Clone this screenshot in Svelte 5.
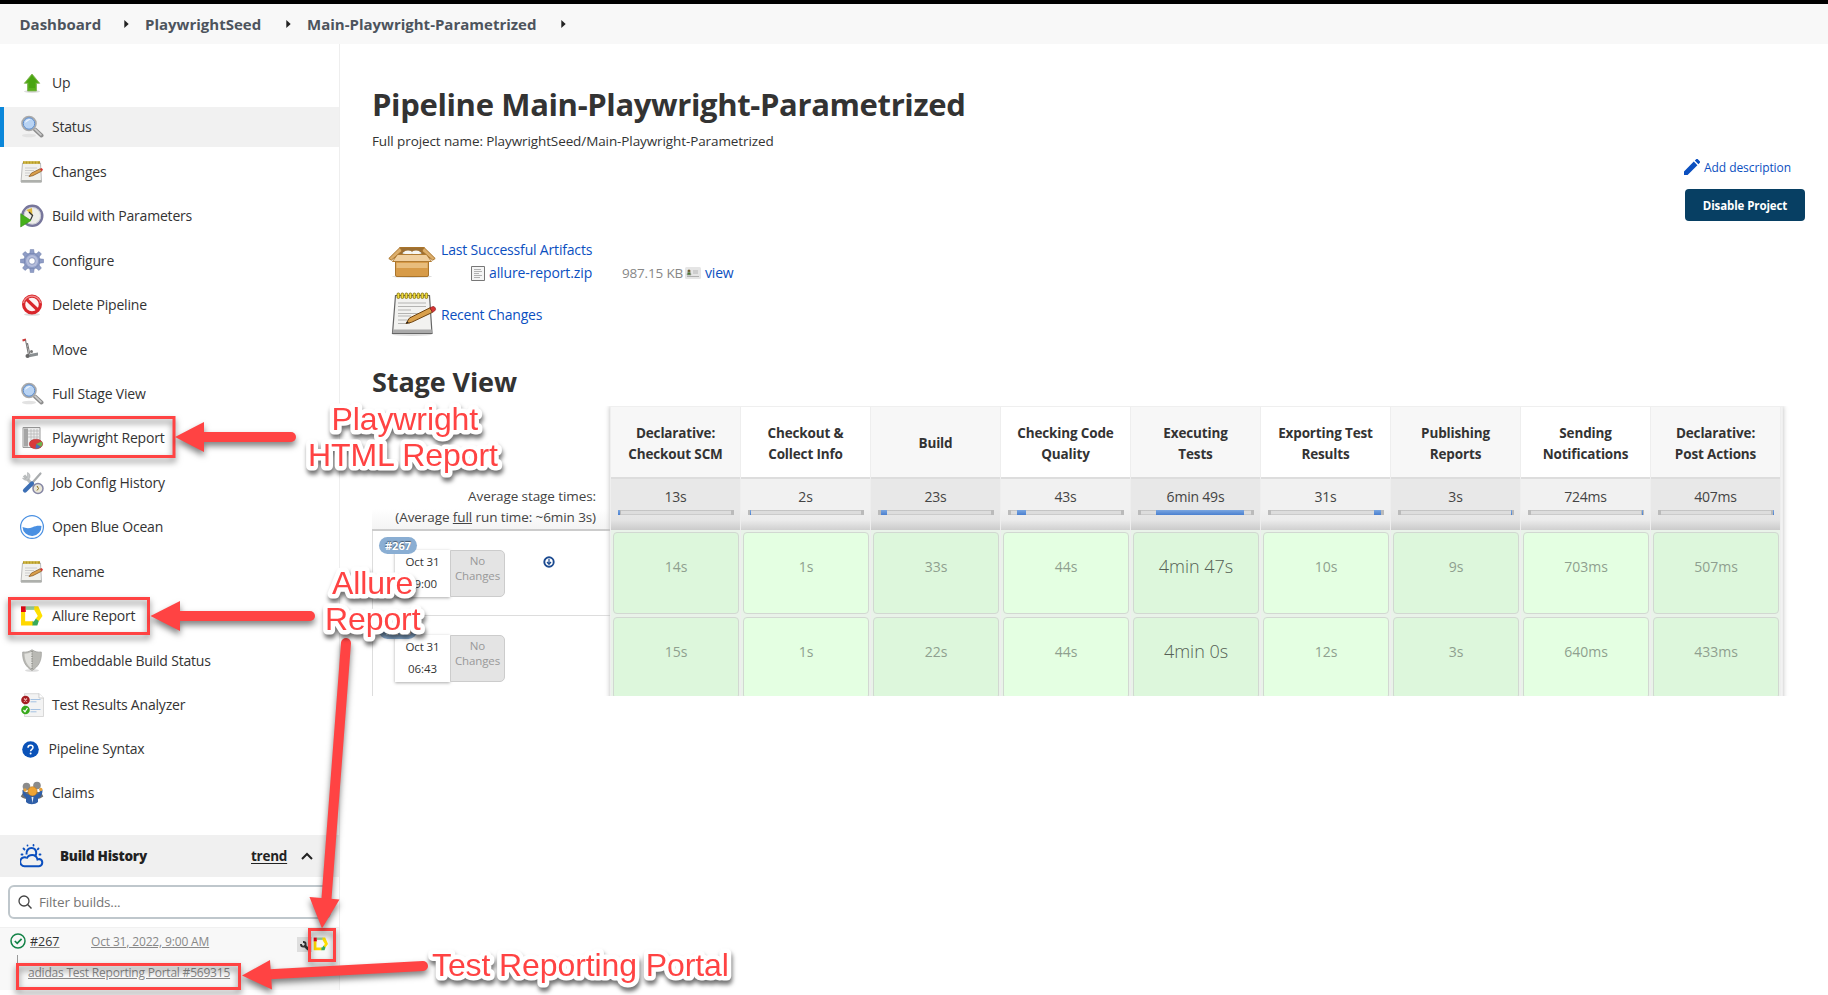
<script>
  const crumbs = [
    { label: 'Dashboard', w: 80 },
    { label: 'PlaywrightSeed', w: 116.5 },
    { label: 'Main-Playwright-Parametrized', w: 229.5 },
  ];

  const tasks = [
    { icon: 'up', label: 'Up' },
    { icon: 'search', label: 'Status', active: true },
    { icon: 'notepad', label: 'Changes' },
    { icon: 'build', label: 'Build with Parameters' },
    { icon: 'gear', label: 'Configure' },
    { icon: 'delete', label: 'Delete Pipeline' },
    { icon: 'move', label: 'Move' },
    { icon: 'search', label: 'Full Stage View' },
    { icon: 'report', label: 'Playwright Report' },
    { icon: 'tools', label: 'Job Config History' },
    { icon: 'ocean', label: 'Open Blue Ocean' },
    { icon: 'notepad', label: 'Rename' },
    { icon: 'allure', label: 'Allure Report' },
    { icon: 'shield', label: 'Embeddable Build Status' },
    { icon: 'results', label: 'Test Results Analyzer' },
    { icon: 'help', label: 'Pipeline Syntax', small: true },
    { icon: 'claims', label: 'Claims' },
  ];

  const stages = [
    { name: ['Declarative:', 'Checkout SCM'], avg: '13s', from: 0, to: 2, runs: ['14s', '15s'] },
    { name: ['Checkout &', 'Collect Info'], avg: '2s', from: 2, to: 3, runs: ['1s', '1s'] },
    { name: ['Build'], avg: '23s', from: 3, to: 9, runs: ['33s', '22s'] },
    { name: ['Checking Code', 'Quality'], avg: '43s', from: 9, to: 18, runs: ['44s', '44s'] },
    { name: ['Executing', 'Tests'], avg: '6min 49s', from: 18, to: 106, runs: ['4min 47s', '4min 0s'], long: true },
    { name: ['Exporting Test', 'Results'], avg: '31s', from: 106, to: 113, runs: ['10s', '12s'] },
    { name: ['Publishing', 'Reports'], avg: '3s', from: 113, to: 114, runs: ['9s', '3s'] },
    { name: ['Sending', 'Notifications'], avg: '724ms', from: 114, to: 115, runs: ['703ms', '640ms'] },
    { name: ['Declarative:', 'Post Actions'], avg: '407ms', from: 115, to: 116, runs: ['507ms', '433ms'] },
  ];

  const runs = [
    { id: '#267', date: 'Oct 31', time: '09:00', artifacts: true },
    { id: '#266', date: 'Oct 31', time: '06:43' },
  ];
</script>

{#snippet allure()}
  <path d="M3.100 8V19.400H13" fill="none" stroke="#ffd800" stroke-width="4.100" />
  <path d="M1 2.300h4.800v5.700H1z" fill="#e30613" />
  <path d="M5.800 2.300h9v3.600h-9z" fill="#97cc9b" />
  <path d="M14.300 2.300H18.300L22.500 12l-3.800 5.200-3.300-2.200L17.800 12 14.300 5.900z" fill="#ffe000" />
  <path d="M12.500 17.400h1.300l2-2.600 3 2.300-1.500 4.350H12.500z" fill="#3aaa5a" />
{/snippet}

{#snippet notepad()}
  <path d="M2.500 3h18l1 19H1z" fill="#f1f1ee" stroke="#aaa" stroke-width=".8" />
  <path d="M1.200 20h20.200v2.600H1z" fill="#aeb0ac" />
  <path d="M3 1.200h17v2.600H3z" fill="#b79a22" />
  <path d="M5 1v3M8 1v3M11 1v3M14 1v3M17 1v3" stroke="#e6d46a" stroke-width=".8" />
  <path d="M5 8h12M5 10.500h9M5 13h5M5 15.500h4" stroke="#c9c9c9" stroke-width=".9" />
  <path d="M9 16.500l2.300-3.300 9-4.500 1.500 2.400-9 4.600z" fill="#dba14e" stroke="#7b4a12" stroke-width=".7" />
  <path d="M20 8.900l1.800-.9 1.300 2.100-1.500 1z" fill="#d93030" />
{/snippet}

{#snippet icon(name)}
  <svg class="ico" viewBox="0 0 24 24">
    {#if name === 'up'}
      <ellipse cx="12" cy="20.500" rx="8" ry="1.500" fill="#ddd" />
      <path d="M12 3l7.700 9.300h-3.200V20h-9v-7.700H4.300z" fill="#58b01c" stroke="#7fae52" stroke-width=".8" />
      <path d="M12 4.500l5.500 7H15V17H9v-5.500H6.500z" fill="#3f9c0a" opacity=".6" />
    {:else if name === 'search'}
      <ellipse cx="9" cy="20.500" rx="7" ry="1.700" fill="#e2e2e2" />
      <path d="M15 14.500l6.500 6" stroke="#8d8d8d" stroke-width="4" stroke-linecap="round" />
      <path d="M15 14.200l6 5.600" stroke="#ccc" stroke-width="1.600" stroke-linecap="round" />
      <circle cx="9" cy="8.500" r="6.800" fill="#a9c9ef" stroke="#aaa" stroke-width="2" />
      <circle cx="9" cy="8.500" r="5.700" fill="#b8d3f3" stroke="#5f8fcf" stroke-width="1" />
      <path d="M5 8a4.500 4.500 0 0 1 6-3.800C9 5 7 6.500 5 8z" fill="#eaf3fd" />
    {:else if name === 'notepad'}
      {@render notepad()}
    {:else if name === 'build'}
      <circle cx="12.300" cy="11.800" r="10" fill="#eeeeea" stroke="#77769b" stroke-width="2.400" />
      <circle cx="12.300" cy="11.800" r="8.300" fill="none" stroke="#bdbdc8" stroke-width=".7" />
      <path d="M6.500 6l5.500-2 .5 8z" fill="#dfb83f" />
      <path d="M9 8l3.600 3.500-2.100 4.500" fill="none" stroke="#333" stroke-width="1.200" />
      <path d="M.7 9.700L11 16.500.7 23z" fill="#45b01b" stroke="#358d13" stroke-width=".6" />
    {:else if name === 'gear'}
      <g fill="#8f9dc6" stroke="#6b7ba8" stroke-width=".5">
        <circle cx="12" cy="12" r="8.200" />
        {#each [0, 45, 90, 135, 180, 225, 270, 315] as a}
          <path d="M9.800 4.600l.5-4.200h3.400l.5 4.200z" transform="rotate({a} 12 12)" />
        {/each}
      </g>
      <circle cx="12" cy="12" r="6" fill="#b4bddb" />
      <circle cx="12" cy="12" r="3.300" fill="#fff" stroke="#7886b2" stroke-width=".8" />
    {:else if name === 'delete'}
      <ellipse cx="12" cy="21.500" rx="8" ry="1.300" fill="#ddd" />
      <circle cx="12" cy="11.500" r="8.400" fill="#fdf3f3" stroke="#d9262b" stroke-width="3.200" />
      <path d="M6.300 6.200l11.500 10.800" stroke="#d9262b" stroke-width="3.200" />
      <path d="M3.500 10a8.700 8.700 0 0 1 17 0" fill="none" stroke="#f08d8d" stroke-width="1.300" />
    {:else if name === 'move'}
      <path d="M2.500 2.500l3.500-1" stroke="#c93b3b" stroke-width="2.200" />
      <path d="M5.500 2l3 15M7.500 5l2.300 11M6 6.500l2-.5M6.500 10l2-.5" stroke="#777" stroke-width="1.100" fill="none" />
      <path d="M9.500 16l8.500-1.500v3L8 19.500z" fill="#8a8f92" />
      <circle cx="7.500" cy="18" r="2" fill="#666" />
      <circle cx="11.500" cy="13.500" r="1.500" fill="#777" />
    {:else if name === 'report'}
      <path d="M3 1.500h17v20H3z" fill="#ededed" stroke="#9a9a9a" />
      <path d="M4 2.500h4v18H4z" fill="#a5a5a5" />
      <path d="M8 5h11M8 8h11M8 11h11M11 3v13M14 3v10M17 3v10" stroke="#b9b9b9" stroke-width=".8" />
      <ellipse cx="16" cy="18" rx="6.700" ry="4.800" fill="#d93a3a" stroke="#a32020" stroke-width=".5" />
      <path d="M16 18l5.500-2.500c1.500 2 .8 4-.5 5.200z" fill="#6fb24d" />
      <path d="M16 18l4.800 2.800c-1.500 1.300-3.500 1.900-5.300 1.900z" fill="#4a72b8" />
    {:else if name === 'tools'}
      <path d="M4 4.500l13 14" stroke="#b9bcbd" stroke-width="3.200" />
      <path d="M7.500 1.500a4 4 0 1 1-5 5.500l3 .8 1.800-1.800z" fill="#c5c8c9" stroke="#a0a3a4" stroke-width=".5" />
      <path d="M20.500 2.500L13 11" stroke="#a9acae" stroke-width="2.200" stroke-linecap="round" />
      <path d="M12 12.500L5 19.500" stroke="#3c6fb5" stroke-width="4.200" stroke-linecap="round" />
      <circle cx="18" cy="17.500" r="5" fill="#e9e6d8" stroke="#8586a4" stroke-width="1.500" />
      <path d="M17 15l1.500 2.500-1.500 2" stroke="#8a6a10" fill="none" />
    {:else if name === 'ocean'}
      <circle cx="12" cy="12" r="11.400" fill="#fff" stroke="#4a90e2" stroke-width="1.200" />
      <path d="M2.500 12c3 1.300 6.500 1.700 10 .2 3.200-1.500 6-1.900 9-1.200a9.500 9.500 0 0 1-19 1z" fill="#4a90e2" />
    {:else if name === 'allure'}
      {@render allure()}
    {:else if name === 'shield'}
      <ellipse cx="12" cy="21.500" rx="7" ry="1.300" fill="#ddd" />
      <path d="M12 .8c3 2 6 2.700 9.300 2.200.5 8-2.300 14.500-9.300 18.500C5 17.500 2.200 11 2.700 3 6 3.500 9 2.800 12 .8z" fill="#b9b9b4" stroke="#a2a29e" stroke-width=".8" />
      <path d="M12 2.500c-2.500 1.500-5 2.200-7.500 2.200C4.500 11 7 16.500 12 19.800z" fill="#e0e0dc" />
      <path d="M12 2v19" stroke="#858580" stroke-width="1.200" stroke-dasharray="1.200 1.200" />
    {:else if name === 'results'}
      <path d="M4.500.7h14.700L23.500 5v18.500h-19z" fill="#f3f3f3" stroke="#cfcfcf" stroke-width=".8" />
      <path d="M19 .7V5h4.500" fill="#fff" stroke="#bbb" stroke-width=".7" />
      <path d="M10.500 6.500h10M10.500 8.800h6M10.500 16.500h10M10.500 18.800h6" stroke="#9bbbe0" stroke-width=".9" />
      <circle cx="5.500" cy="7" r="4.300" fill="#a41e22" />
      <path d="M4 5.500l3 3m0-3l-3 3" stroke="#f3b5b5" stroke-width="1.200" />
      <circle cx="5.500" cy="17" r="4.300" fill="#37a81a" />
      <path d="M3.500 17l1.500 1.800 2.500-3.800" fill="none" stroke="#fff" stroke-width="1.200" />
    {:else if name === 'claims'}
      <path d="M3.500 11h7l1 6.500C8 19 4 18 .7 15.500zM13 11h8l2.300 4.500c-3 2.500-7 3-10 2z" fill="#707070" />
      <circle cx="6.500" cy="5.500" r="3.800" fill="#8b8b8b" />
      <circle cx="17" cy="4.500" r="3.800" fill="#8b8b8b" />
      <path d="M4 8.500c.5 3 2.500 5 4.500 5h7c2.500 0 4.500-2 5-5.500l2 1c0 5-2 7.500-4.500 8.500v3.500c-3.500 3-9 3-12 0v-4C3.500 15.500 2 12.500 2.500 9z" fill="#2f5fa8" />
      <circle cx="5" cy="9" r="1.700" fill="#e5a03a" />
      <circle cx="20.800" cy="8.500" r="1.700" fill="#e5a03a" />
      <circle cx="12.500" cy="10.300" r="4.600" fill="#f0a433" stroke="#b7741a" stroke-width=".6" />
      <path d="M11.500 16l1 6 1-6z" fill="#e7edf6" />
    {/if}
  </svg>
{/snippet}

<div class="page">
  <div class="topline"></div>
  <nav class="crumbs">
    {#each crumbs as c}
      <a class="crumb" style="width:{c.w}px">{c.label}</a>
      <svg class="tri" viewBox="0 0 5 8"><path d="M.3 0L4.700 4 .3 8z" fill="#222" /></svg>
    {/each}
  </nav>

  <div class="body">
    <aside>
      <div class="tasks">
        {#each tasks as t}
          <a class="task" class:active={t.active} class:small={t.small}>
            {#if t.small}
              <svg class="ico16" viewBox="0 0 17 17">
                <circle cx="8.500" cy="8.500" r="8.300" fill="#0b52b8" />
                <path d="M6 6.700C6 5.200 7 4.300 8.500 4.300S11 5.200 11 6.500c0 1.900-2.400 1.900-2.400 3.800" fill="none" stroke="#fff" stroke-width="1.500" />
                <circle cx="8.600" cy="12.500" r="1" fill="#fff" />
              </svg>
            {:else}
              {@render icon(t.icon)}
            {/if}
            <span>{t.label}</span>
          </a>
        {/each}
      </div>

      <div class="bh">
        <svg class="ico" viewBox="0 0 24 24" fill="none" stroke="#0b4fbf" stroke-width="2">
          <path d="M6 13.500a4.500 4.500 0 1 0-1.500 8.800H19a3.700 3.700 0 0 0 .3-7.300c-.8 0-1.300.2-1.800.5-.7-2.800-2.700-4.500-5.300-4.500-2.700 0-4.700 1.500-5.700 3.700" />
          <path d="M6.500 10.500C6 6.500 8.500 4 11.500 4s5 2.200 4.700 5.500c-.1 1.200-.5 2-1.200 3" />
          <path d="M3.500 4.500l1 1M7.500 1.500v.01M13.500 1v.6M18.500 4.500l-.8.800M20.500 10.500h-1M1.500 10.500h1" stroke-width="1.800" stroke-linecap="round" />
        </svg>
        <b>Build History</b>
        <u>trend</u>
        <svg class="chev" viewBox="0 0 12 8"><path d="M1 7l5-5 5 5" fill="none" stroke="#222" stroke-width="2" /></svg>
      </div>

      <div class="filter">
        <svg viewBox="0 0 14 14"><circle cx="6" cy="6" r="5" fill="none" stroke="#444" stroke-width="1.300" /><path d="M9.600 9.600l3.900 3.900" stroke="#444" stroke-width="1.400" /></svg>
        <span>Filter builds...</span>
      </div>

      <div class="builds">
        <div class="brow">
          <svg class="ok" viewBox="0 0 16 16"><circle cx="8" cy="8" r="7" fill="none" stroke="#138347" stroke-width="1.500" /><path d="M4.800 8l2.400 2.400 4.400-4.600" fill="none" stroke="#138347" stroke-width="1.700" /></svg>
          <a class="num">#267</a>
          <a class="when">Oct 31, 2022, 9:00 AM</a>
          <svg class="wrench" viewBox="0 0 15 15"><path d="M0 0h15v15H0z" fill="#dedede" /><path d="M7.500 8.500l4 4" stroke="#333" stroke-width="2.600" /><circle cx="6.300" cy="7.300" r="2.300" fill="none" stroke="#333" stroke-width="1.900" /><path d="M2 4h4v3H2z" fill="#dedede" /></svg>
          <svg class="mini" viewBox="0 0 24 24">{@render allure()}</svg>
        </div>
        <div class="portal"><i></i><a>adidas Test Reporting Portal #569315</a></div>
      </div>
    </aside>

    <main>
      <h1>Pipeline Main-Playwright-Parametrized</h1>
      <p class="full">Full project name: PlaywrightSeed/Main-Playwright-Parametrized</p>
      <div class="actions">
        <a class="desc">
          <svg viewBox="0 0 16 16"><path d="M0 16v-3.600L9.800 2.600l3.600 3.600L3.600 16zM10.800 1.600L12.400 0c.4-.3.900-.3 1.200 0L16 2.400c.3.400.3.900 0 1.200l-1.600 1.600z" fill="#0b4fbf" /></svg>
          <span>Add description</span>
        </a>
        <button>Disable Project</button>
      </div>

      <div class="artifacts">
        <svg class="box" viewBox="0 0 48 32">
          <ellipse cx="24" cy="30.500" rx="20" ry="1.500" fill="#ddd" />
          <path d="M12 1.500h24l3 13H9z" fill="#9c6f33" stroke="#a9742b" />
          <path d="M15 6h18l1 5H14z" fill="#d9d9d3" /><ellipse cx="20" cy="6.500" rx="4" ry="2" fill="#f6f6f2" /><ellipse cx="28" cy="6.500" rx="4" ry="2" fill="#f6f6f2" />
          <path d="M12 1.500L.8 12.500l2.500 1.700L14 5zM36 1.500l11.200 11-2.500 1.700L34 5z" fill="#dcae6b" stroke="#a9742b" />
          <path d="M7.500 15.500h33V29q0 1.500-1.500 1.500H9q-1.500 0-1.500-1.500z" fill="#d79b48" stroke="#a9742b" />
          <path d="M8.500 17h31v5h-31z" fill="#e8bd7c" />
          <path d="M9.500 8.500h29l5 7h-39z" fill="#f0d0a0" stroke="#b07b32" />
        </svg>
        <div class="art">
          <a class="last">Last Successful Artifacts</a>
          <div class="file">
            <svg class="doc" viewBox="0 0 14 15"><path d="M.5.5h13v14H.5z" fill="#f5f5f5" stroke="#777" /><path d="M3 3.500h7M3 5.500h8M3 7.500h5M3 9.500h8M3 11.500h6" stroke="#aaa" stroke-width=".9" /></svg>
            <a class="zip">allure-report.zip</a>
            <span class="size">987.15 KB</span>
            <svg class="card" viewBox="0 0 16 12"><rect width="16" height="12" rx="1.500" fill="#e5e5e5" /><circle cx="4" cy="4" r="1.500" fill="#6d5a2a" /><path d="M2 8q0-3 2-3t2 3zM2 9.500h12" fill="#4c7a34" stroke="#999" stroke-width=".7" /><path d="M8 4h5M8 6h5" stroke="#aaa" stroke-width=".8" /></svg>
            <a class="view">view</a>
          </div>
        </div>
      </div>
      <div class="recent">
        <svg viewBox="0 0 46 44">
          <ellipse cx="21" cy="42.500" rx="20" ry="1.500" fill="#ddd" />
          <path d="M4.500 3.500h34l2.500 38H1.500z" fill="#f2f2f0" stroke="#666" stroke-width="1.200" />
          <path d="M2 37.500h38.700l.2 3.500H1.700z" fill="#aaa" />
          <path d="M7 11h28M7 14.500h28M7 18h13M7 24h13M7 28h11M7 31.500h12M7 21.500h20" stroke="#b4b4b2" />
          {#each [6, 10, 14, 18, 22, 26, 30, 34] as x}
            <rect x={x} y="1" width="2.700" height="5.500" rx="1.300" fill="#f0dc3c" stroke="#7d6a08" stroke-width=".8" />
          {/each}
          <path d="M15 31.500l3.500-5.500L39 15.800l2.500 4.500-21 10z" fill="#d9a04b" stroke="#6d4210" />
          <path d="M39 15.800l3-1.300q1.500-.2 2.300 1.500.8 2-.5 2.800l-2.300 1.500z" fill="#d83434" stroke="#8c2020" stroke-width=".7" />
          <path d="M15 31.500l1.400-2.200 1.300 1.500z" fill="#222" />
        </svg>
        <a>Recent Changes</a>
      </div>

      <h2>Stage View</h2>

      <div class="stageview">
        <div class="left">
          <div class="avgs">
            <span>Average stage times:</span>
            <span>(Average <u>full</u> run time: ~6min 3s)</span>
          </div>
          {#each runs as r}
            <div class="run">
              <span class="badge">{r.id}</span>
              <div class="cardrow">
                <div class="date"><span>{r.date}</span><span>{r.time}</span></div>
                <div class="nochg">No<br />Changes</div>
                {#if r.artifacts}
                  <svg class="dl" viewBox="0 0 12 12"><circle cx="6" cy="6" r="4.700" fill="#fff" stroke="#1b4a90" stroke-width="1.900" /><path d="M6 3v5M4 6l2 2.300L8 6" fill="none" stroke="#1b4a90" stroke-width="1.200" /></svg>
                {/if}
              </div>
            </div>
          {/each}
        </div>
        <div class="table">
          {#each stages as s}
            <div class="col">
              <div class="head">{#each s.name as n}<span>{n}</span>{/each}</div>
              <div class="avg">
                <span>{s.avg}</span>
                <div class="bar"><i style="margin-left:{s.from}px;width:{s.to - s.from}px"></i></div>
              </div>
              {#each s.runs as v}
                <div class="cellwrap"><div class="cell" class:long={s.long}>{v}</div></div>
              {/each}
            </div>
          {/each}
        </div>
      </div>
    </main>
  </div>

  <svg class="notes" viewBox="0 0 1828 995">
    <g class="shadow" fill="none" stroke="#ff4343" stroke-width="3">
      <rect x="13.500" y="417.500" width="160.500" height="39" />
      <rect x="9.500" y="598.500" width="139" height="35" />
      <rect x="309.500" y="929.500" width="25" height="31" />
      <rect x="17.500" y="964.500" width="222" height="24" />
    </g>
    <g class="shadow" fill="#ff4343" stroke="#ff4343">
      <g stroke-width="10" stroke-linecap="round">
        <path d="M200 437H291" /><path d="M176 616H310" /><path d="M346 643L326 905" /><path d="M265 974.500L423 966" />
      </g>
      <g stroke="none">
        <path d="M175 437L204 422v30z" />
        <path d="M150.500 616L180 601v30z" />
        <path d="M322 928.500L309.500 897l30 2.500z" />
        <path d="M242 975.500L270 960l2 29.500z" />
      </g>
    </g>
    <g class="labels">
      <text x="331.500" y="430">Playwright</text>
      <text x="308" y="466">HTML Report</text>
      <text x="332" y="594">Allure</text>
      <text x="325" y="630">Report</text>
      <text x="432" y="976">Test Reporting Portal</text>
    </g>
  </svg>
</div>

<style>
  :global(body) { margin: 0; background: #fff; }
  .page { position: relative; width: 1828px; height: 995px; overflow: hidden; background: #fff; color: #333; font: 14px/20px "Open Sans", "Noto Sans", sans-serif; }
  svg { display: block; flex: none; }
  .topline { height: 4px; background: #000; }
  .crumbs { height: 40px; background: #f8f8f8; display: flex; align-items: center; padding-left: 19.500px; box-sizing: border-box; }
  .crumb { font-weight: 700; font-size: 15px; color: #4d545d; white-space: nowrap; line-height: 40px; flex: none; }
  .tri { width: 5px; height: 8px; margin: 0 16px 0 24.500px; }

  .body { display: flex; height: 951px; }
  aside { width: 339px; height: 946px; border-right: 1px solid #eee; flex: none; }
  .tasks { padding-top: 18.950px; height: 772px; box-sizing: border-box; display: flex; flex-direction: column; gap: 4.450px; }
  .task { height: 40px; display: flex; align-items: center; gap: 8px; padding-left: 20px; font-weight: 500; letter-spacing: -.2px; color: #333; white-space: nowrap; flex: none; }
  .task.active { background: #f1f1f1; border-left: 4px solid #0b87da; padding-left: 16px; }
  .task.small { padding-left: 21.500px; gap: 10px; margin: -.5px 0; }
  .ico { width: 24px; height: 24px; }
  .ico16 { width: 17px; height: 17px; }
  .bh { margin-top: 19px; height: 42px; background: #f0f0f0; display: flex; align-items: center; padding-left: 20px; padding-bottom: 1px; box-sizing: border-box; color: #222; font-weight: 700; font-size: 13.500px; letter-spacing: -.25px; }
  .bh b { margin-left: 16px; width: 191px; white-space: nowrap; }
  .bh u { width: 36px; text-underline-offset: 2px; }
  .chev { width: 12px; height: 8px; margin-left: 14px; }
  .filter { margin: 8px 8px 0; height: 34px; box-sizing: border-box; border: 2px solid #bfc7cc; border-radius: 6px; display: flex; align-items: center; padding-left: 8px; color: #757575; gap: 7px; font-size: 13.500px; letter-spacing: -.15px; }
  .filter svg { width: 14px; height: 14px; }
  .builds { margin-top: 8px; height: 63px; background: #f8f8f8; box-sizing: border-box; border-top: 1px solid #f0f0f0; font-size: 12px; letter-spacing: -.15px; }
  .brow { display: flex; align-items: center; height: 28px; padding-left: 10px; color: #888; text-decoration: underline; }
  .ok { width: 16px; height: 16px; margin-right: 4px; margin-top: -2px; }
  .num { color: #333; width: 61px; font-size: 12.500px; letter-spacing: 0; }
  .when { width: 206px; white-space: nowrap; }
  .wrench { width: 15px; height: 15px; margin-top: 4px; }
  .mini { width: 16px; height: 16px; margin: 4px 0 0 1px; }
  .portal { display: flex; align-items: center; padding-left: 17px; color: #888; text-decoration: underline; white-space: nowrap; height: 34px; letter-spacing: -.21px; }
  .portal i { width: 1px; height: 14px; background: #999; margin: -22px 10px 0 0; }

  main { flex: 1; padding: 40px 0 0 32px; min-width: 0; }
  h1 { margin: 0; font-size: 31px; letter-spacing: -.36px; line-height: 40px; font-weight: 700; white-space: nowrap; }
  .full { margin: 7px 0 0; line-height: 20px; font-size: 13.500px; letter-spacing: -.1px; }
  .actions { display: flex; flex-direction: column; align-items: flex-end; padding: 6px 23px 0 0; height: 80px; box-sizing: border-box; }
  .desc { display: flex; align-items: center; gap: 4px; color: #0b4fbf; font-size: 12px; letter-spacing: -.08px; margin-right: 14px; height: 20px; }
  .desc span { padding-top: 1px; }
  .desc svg { width: 16px; height: 16px; }
  button { margin-top: 12px; width: 120px; height: 32px; border: 0; border-radius: 4px; background: #073f63; color: #fff; font: 700 11.500px "Open Sans", sans-serif; letter-spacing: -.1px; padding: 0; white-space: nowrap; }
  .artifacts { display: flex; padding-left: 16px; color: #0b4fbf; font-weight: 500; margin-top: 9px; height: 50px; letter-spacing: -.18px; }
  .box { width: 48px; height: 32px; margin-top: 6px; }
  .art { padding-left: 5px; display: flex; flex-direction: column; }
  .last { line-height: 20px; white-space: nowrap; }
  .file { display: flex; align-items: center; padding-left: 30px; margin-top: 3px; height: 20px; white-space: nowrap; }
  .doc { width: 14px; height: 15px; margin-right: 4px; }
  .zip { width: 133px; letter-spacing: -.12px; }
  .size { width: 63px; color: #888; font-weight: 400; font-size: 13.500px; }
  .card { width: 16px; height: 12px; margin-right: 4px; }
  .recent { display: flex; align-items: center; height: 44px; margin-top: 2px; padding-left: 19px; gap: 4px; color: #0b4fbf; font-weight: 500; letter-spacing: -.22px; }
  .recent a { padding-top: 1px; }
  .recent svg { width: 46px; height: 44px; }
  h2 { margin: 26px 0 0; font-size: 27px; letter-spacing: -.1px; line-height: 40px; font-weight: 700; white-space: nowrap; }

  .stageview { display: flex; height: 290px; overflow: hidden; margin-top: 4px; }
  .left { width: 238px; box-sizing: border-box; padding-top: 72px; flex: none; }
  .avgs { height: 53px; box-sizing: border-box; border-bottom: 2px solid #ccc; background: linear-gradient(#fff 60%, #f4f4f4); text-align: right; padding: 8px 14px 0 0; display: flex; flex-direction: column; align-items: flex-end; white-space: nowrap; line-height: 21px; color: #444; font-size: 13.500px; letter-spacing: -.09px; }
  .run { height: 85px; border-left: 1px solid #ddd; border-bottom: 1px solid #ddd; box-sizing: border-box; padding: 6px 0 0 6px; }
  .badge { position: relative; display: block; width: 38px; height: 17px; border-radius: 9px; background: #8aaed3; color: #fff; font-weight: 700; font-size: 11px; line-height: 17px; text-align: center; text-shadow: 0 -1px 1px #456; }
  .cardrow { display: flex; margin: -4px 0 0 16px; font-size: 11.500px; letter-spacing: -.1px; }
  .date { width: 55px; height: 47px; background: #fff; box-shadow: 0 1px 3px #aaa; display: flex; flex-direction: column; align-items: center; line-height: 22px; box-sizing: border-box; padding-top: 1px; }
  .nochg { width: 55px; height: 47px; box-sizing: border-box; background: #e4e4e4; border: 1px solid #ccc; border-radius: 0 5px 5px 0; color: #999; text-align: center; line-height: 15px; padding-top: 2px; }
  .dl { width: 12px; height: 12px; margin: 6px 0 0 38px; }
  .table { display: flex; width: 1173px; height: 310px; border: 1px solid #efefef; box-shadow: 0 0 5px #bbb; box-sizing: border-box; background: #f2f2f2; }
  .col { width: 130px; box-sizing: border-box; border-right: 1px solid #eee; flex: none; }
  .head { height: 72px; box-sizing: border-box; padding-top: 3px; background: #fff; display: flex; flex-direction: column; align-items: center; justify-content: center; font-weight: 700; font-size: 13.500px; letter-spacing: -.15px; line-height: 21px; white-space: nowrap; border-bottom: 2px solid #ddd; }
  .avg { height: 51px; display: flex; flex-direction: column; align-items: center; background: linear-gradient(#f1f1f1 60%, #ececec 80%, #d0d0d0); line-height: 21px; padding-top: 7px; box-sizing: border-box; letter-spacing: -.2px; color: #444; }
  .bar { width: 116px; height: 5px; background: linear-gradient(#b8b8b8, #ddd 30%, #ddd 70%, #c2c2c2); margin-top: 3px; display: flex; box-shadow: inset 3px 0 0 #bbb, inset -3px 0 0 #bbb; }
  .bar i { background: linear-gradient(#7ba6e0, #4a80d0); height: 5px; }
  .cellwrap { height: 85px; padding: 2px 1px 1px 2px; box-sizing: border-box; background: #e9f3e9; }
  .cell { height: 82px; box-sizing: border-box; border: 1px solid #d2d8d2; border-radius: 4px; background: #e4ffe2; color: #8f9f8f; text-align: center; line-height: 67px; }
  .cell.long { font-size: 18px; color: #555f55; font-weight: 300; }
  .col:nth-child(odd) .head { background: #f7f7f7; }
  .col:nth-child(odd) .avg { background: linear-gradient(#e8e8e8 60%, #e4e4e4 80%, #cbcbcb); }
  .col:nth-child(odd) .cell { background: #ddf7dc; }

  .notes { position: absolute; z-index: 5; left: 0; top: 0; width: 1828px; height: 995px; pointer-events: none; }
  .shadow { filter: drop-shadow(0 4px 3px rgba(0, 0, 0, .5)); }
  .labels { font: 32px "Liberation Sans", Arial, sans-serif; letter-spacing: -.1px; fill: #ff4343; stroke: #fff; stroke-width: 9px; stroke-linejoin: round; paint-order: stroke; filter: drop-shadow(1px 4px 2px rgba(0, 0, 0, .55)); }
</style>
